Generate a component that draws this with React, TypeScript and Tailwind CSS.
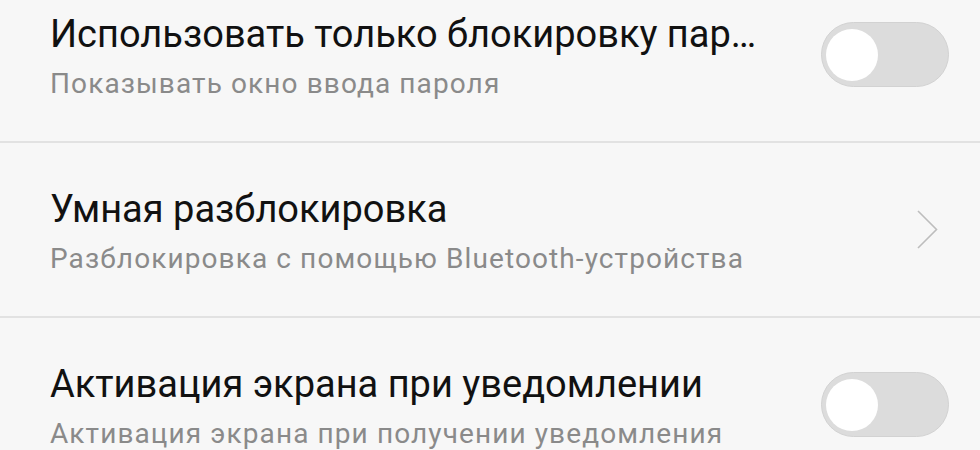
import React from "react";

function Toggle() {
  return (
    <div className="flex h-[65px] w-[128px] shrink-0 items-center rounded-full border border-[#d2d2d2] bg-[#dcdcdc] px-[4px]">
      <div className="h-[52px] w-[52px] rounded-full bg-white" />
    </div>
  );
}

function Chevron() {
  return (
    <svg width="24" height="40" viewBox="0 0 24 40" className="mr-[9px] shrink-0">
      <path d="M2 1 L20.5 19.5 L2 38" fill="none" stroke="#bdbdbd" strokeWidth="1.6" />
    </svg>
  );
}

function Row({ title, sub, right }: { title: string; sub: string; right: React.ReactNode }) {
  return (
    <div className="flex h-[173px] items-center justify-between pl-[50px] pr-[31px]">
      <div className="flex min-w-0 flex-col pt-[2px]">
        <div className="text-[38px] leading-[44px] text-[#111111]">{title}</div>
        <div className="mt-[12px] text-[28px] leading-[32px] tracking-[1.1px] text-[#8a8a8a]">{sub}</div>
      </div>
      {right}
    </div>
  );
}

export default function App() {
  return (
    <div
      className="h-[450px] w-[980px] overflow-hidden bg-[#f7f7f7]"
      style={{ fontFamily: "Roboto, 'Noto Sans', sans-serif" }}
    >
      <div className="mt-[-32px] flex flex-col">
        <Row title="Использовать только блокировку пар…" sub="Показывать окно ввода пароля" right={<Toggle />} />
        <div className="h-[2px] bg-[#e2e2e2]" />
        <Row
          title="Умная разблокировка"
          sub="Разблокировка с помощью Bluetooth-устройства"
          right={<Chevron />}
        />
        <div className="h-[2px] bg-[#e2e2e2]" />
        <Row
          title="Активация экрана при уведомлении"
          sub="Активация экрана при получении уведомления"
          right={<Toggle />}
        />
      </div>
    </div>
  );
}
